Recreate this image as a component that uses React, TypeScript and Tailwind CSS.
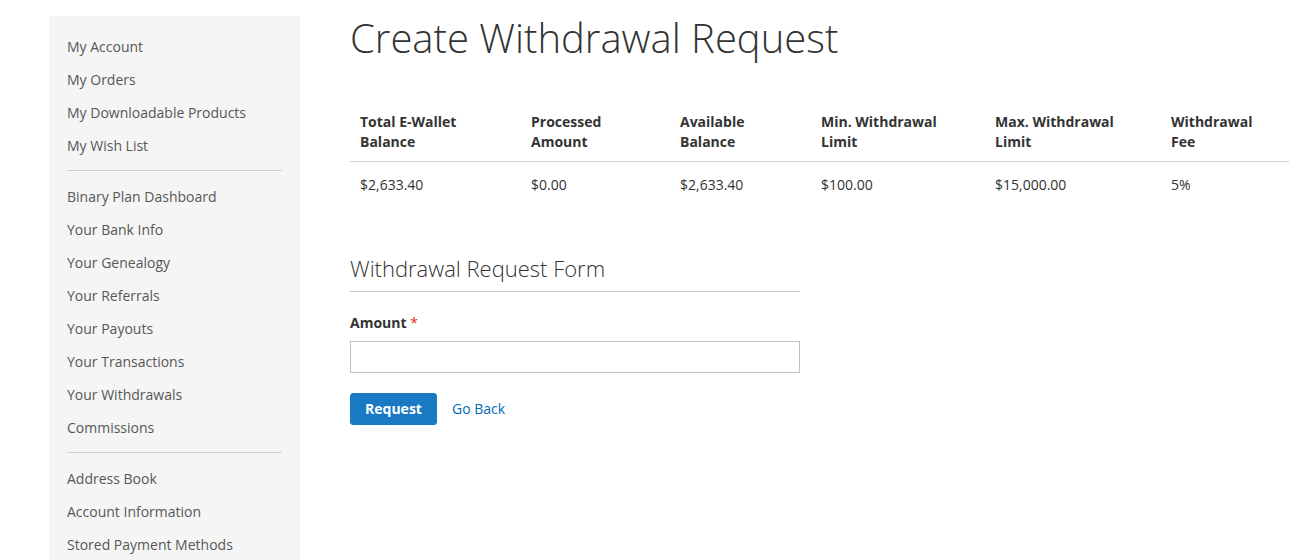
import React from "react";

const groups: string[][] = [
  ["My Account", "My Orders", "My Downloadable Products", "My Wish List"],
  [
    "Binary Plan Dashboard",
    "Your Bank Info",
    "Your Genealogy",
    "Your Referrals",
    "Your Payouts",
    "Your Transactions",
    "Your Withdrawals",
    "Commissions",
  ],
  ["Address Book", "Account Information", "Stored Payment Methods"],
];

const cols = [
  { h: ["Total E-Wallet", "Balance"], v: "$2,633.40", w: "w-[171px]" },
  { h: ["Processed", "Amount"], v: "$0.00", w: "w-[149px]" },
  { h: ["Available", "Balance"], v: "$2,633.40", w: "w-[141px]" },
  { h: ["Min. Withdrawal", "Limit"], v: "$100.00", w: "w-[174px]" },
  { h: ["Max. Withdrawal", "Limit"], v: "$15,000.00", w: "w-[176px]" },
  { h: ["Withdrawal", "Fee"], v: "5%", w: "w-[128px]" },
];

export default function App() {
  return (
    <div
      className="min-h-[560px] bg-white text-[#333333] text-[14px] leading-[20px]"
      style={{ fontFamily: '"Open Sans", "Liberation Sans", sans-serif' }}
    >
      <div className="flex pt-[16px] pl-[49px] gap-[50px]">
        {/* Sidebar */}
        <div className="w-[251px] shrink-0 bg-[#f5f5f5] pt-[16px] pb-[15px]">
          <ul className="block">
            {groups.map((g, gi) => (
              <React.Fragment key={gi}>
                {gi > 0 && (
                  <li className="block border-t border-[#d1d1d1] mt-[9px] mb-[11px] mx-[18px]" />
                )}
                {g.map((item, ii) => (
                  <li
                    key={item}
                    className={`block ${ii === 0 ? "" : "mt-[3px]"}`}
                  >
                    <a className="block border-l-[3px] border-transparent pl-[15px] pr-[18px] py-[5px] text-[#575757] leading-[20px]">
                      {item}
                    </a>
                  </li>
                ))}
              </React.Fragment>
            ))}
          </ul>
        </div>

        {/* Main */}
        <div className="w-[939px]">
          <h1 className="text-[40px] leading-[44px] font-light text-[#333333] mb-[44px]">
            Create Withdrawal Request
          </h1>

          <table className="w-[939px] border-collapse table-fixed">
            <thead>
              <tr className="border-b border-[#d1d1d1]">
                {cols.map((c) => (
                  <th
                    key={c.v + c.h[0]}
                    className={`${c.w} text-left align-top font-bold px-[10px] pt-[8px] pb-[9px]`}
                  >
                    {c.h[0]}
                    <br />
                    {c.h[1]}
                  </th>
                ))}
              </tr>
            </thead>
            <tbody>
              <tr>
                {cols.map((c) => (
                  <td key={c.h[0]} className="px-[10px] pt-[13px] pb-[10px]">
                    {c.v}
                  </td>
                ))}
              </tr>
            </tbody>
          </table>

          <div className="w-[450px] mt-[50px]">
            <div className="text-[22px] leading-[26px] font-light border-b border-[#c6c6c6] pb-[10px]">
              Withdrawal Request Form
            </div>
            <div className="mt-[21px] font-bold">
              Amount <span className="text-[#e02b27] font-normal">*</span>
            </div>
            <input
              type="text"
              className="block mt-[8px] w-[450px] h-[32px] border border-[#c2c2c2] bg-white px-[9px] outline-none"
            />
            <div className="flex items-center mt-[20px] gap-[15px]">
              <button className="h-[32px] w-[87px] bg-[#1979c3] text-white font-bold rounded-[3px] border border-[#1979c3]">
                Request
              </button>
              <a className="text-[#006bb4]">Go Back</a>
            </div>
          </div>
        </div>
      </div>
    </div>
  );
}
